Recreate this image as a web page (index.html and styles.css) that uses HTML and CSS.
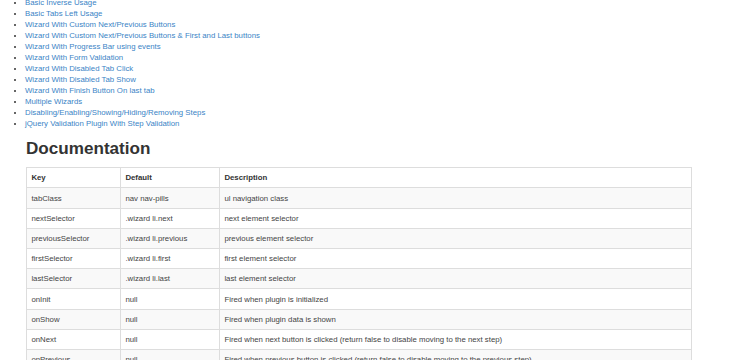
FILE: index.html
```html
<!DOCTYPE html>
<html lang="en">
<head>
<meta charset="utf-8">
<title>Documentation</title>
<link rel="stylesheet" href="styles.css">
</head>
<body>
<div class="page">
  <ul class="examples">
    <li><a href="#">Basic Inverse Usage</a></li>
    <li><a href="#">Basic Tabs Left Usage</a></li>
    <li><a href="#">Wizard With Custom Next/Previous Buttons</a></li>
    <li><a href="#">Wizard With Custom Next/Previous Buttons &amp; First and Last buttons</a></li>
    <li><a href="#">Wizard With Progress Bar using events</a></li>
    <li><a href="#">Wizard With Form Validation</a></li>
    <li><a href="#">Wizard With Disabled Tab Click</a></li>
    <li><a href="#">Wizard With Disabled Tab Show</a></li>
    <li><a href="#">Wizard With Finish Button On last tab</a></li>
    <li><a href="#">Multiple Wizards</a></li>
    <li><a href="#">Disabling/Enabling/Showing/Hiding/Removing Steps</a></li>
    <li><a href="#">jQuery Validation Plugin With Step Validation</a></li>
  </ul>
  <h2 class="doc-title">Documentation</h2>
  <table class="doc-table">
    <colgroup>
      <col class="col-key">
      <col class="col-default">
      <col>
    </colgroup>
    <thead>
      <tr><th>Key</th><th>Default</th><th>Description</th></tr>
    </thead>
    <tbody>
      <tr><td>tabClass</td><td>nav nav-pills</td><td>ul navigation class</td></tr>
      <tr><td>nextSelector</td><td>.wizard li.next</td><td>next element selector</td></tr>
      <tr><td>previousSelector</td><td>.wizard li.previous</td><td>previous element selector</td></tr>
      <tr><td>firstSelector</td><td>.wizard li.first</td><td>first element selector</td></tr>
      <tr><td>lastSelector</td><td>.wizard li.last</td><td>last element selector</td></tr>
      <tr><td>onInit</td><td>null</td><td>Fired when plugin is initialized</td></tr>
      <tr><td>onShow</td><td>null</td><td>Fired when plugin data is shown</td></tr>
      <tr><td>onNext</td><td>null</td><td>Fired when next button is clicked (return false to disable moving to the next step)</td></tr>
      <tr><td>onPrevious</td><td>null</td><td>Fired when previous button is clicked (return false to disable moving to the previous step)</td></tr>
    </tbody>
  </table>
</div>
</body>
</html>
```
FILE: styles.css
```css
html, body {
  margin: 0;
  padding: 0;
  background: #fff;
}

body {
  font-family: "Liberation Sans", Arial, sans-serif;
  font-size: 7.8px;
  line-height: 11px;
  color: #444;
  overflow: hidden;
}

.page {
  margin-top: -3.15px;
  padding: 0 58px 0 26px;
}

.examples {
  margin: 0 0 0 -1px;
  padding: 0;
  list-style: disc outside;
}

.examples li {
  color: #333;
}

.examples a {
  color: #3a84c6;
  text-decoration: none;
}

.doc-title {
  margin: 11.15px 0 8.6px;
  font-size: 17.1px;
  line-height: 18.7px;
  font-weight: 700;
  color: #333;
}

.doc-table {
  width: 100%;
  border-collapse: collapse;
  table-layout: fixed;
  border: 1px solid #ddd;
}

.col-key {
  width: 94px;
}

.col-default {
  width: 99px;
}

.doc-table th,
.doc-table td {
  padding: 4.1px 4.4px;
  border: 1px solid #ddd;
  text-align: left;
  vertical-align: top;
  line-height: 11px;
  white-space: nowrap;
  overflow: hidden;
}

.doc-table th {
  font-weight: 700;
  color: #333;
}

.doc-table tbody tr:nth-child(odd) {
  background: #f9f9f9;
}
```
